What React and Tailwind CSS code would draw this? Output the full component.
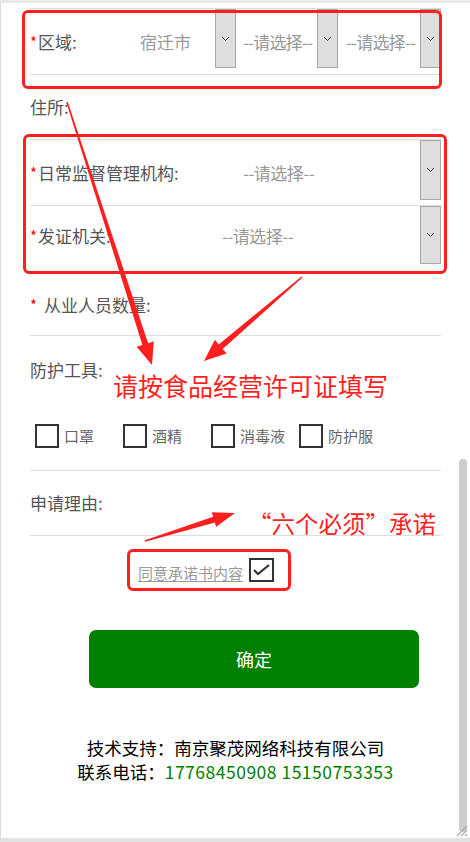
import React from "react";

const arrowPoints = (x1, y1, x2, y2, w1, w2, hl, hw) => {
  const dx = x2 - x1;
  const dy = y2 - y1;
  const len = Math.hypot(dx, dy);
  const ux = dx / len;
  const uy = dy / len;
  const px = -uy;
  const py = ux;
  const bx = x2 - ux * hl;
  const by = y2 - uy * hl;
  const pts = [
    [x1 + (px * w1) / 2, y1 + (py * w1) / 2],
    [bx + (px * w2) / 2, by + (py * w2) / 2],
    [bx + (px * hw) / 2, by + (py * hw) / 2],
    [x2, y2],
    [bx - (px * hw) / 2, by - (py * hw) / 2],
    [bx - (px * w2) / 2, by - (py * w2) / 2],
    [x1 - (px * w1) / 2, y1 - (py * w1) / 2],
  ];
  return pts.map((p) => p.join(",")).join(" ");
};

const Chevron = () => (
  <svg width="9" height="6" viewBox="0 0 9 6">
    <path d="M1 1 L4.5 4.5 L8 1" fill="none" stroke="#444" strokeWidth="1" />
  </svg>
);

const ArrowBox = ({ h = "h-[59px]" }) => (
  <div className={`w-[21px] ${h} self-start bg-[#dedede] border border-[#a8a8a8] flex items-center justify-center`}>
    <Chevron />
  </div>
);

const Star = () => <span className="text-[#ff0000] text-[15px] mr-px">*</span>;

const Check = ({ label }) => (
  <div className="w-[88px] flex items-center">
    <div className="w-[24px] h-[24px] border-2 border-[#333]" />
    <span className="ml-[5px] text-[15px] text-[#666]">{label}</span>
  </div>
);

const App = () => {
  return (
    <div
      lang="zh-CN"
      className="relative w-[470px] h-[842px] bg-white overflow-hidden font-['Noto_Sans_CJK_SC','Noto_Sans',sans-serif] leading-[24px]"
    >
      <div className="h-[3px] bg-[#e9e9e9]" />
      <div className="flex h-[835px]">
        <div className="w-px bg-[#dcdcdc]" />
        <main className="w-[457px] pl-[29px] pr-[17px] pt-[5px] text-[17px] text-[#555]">
          {/* 区域 */}
          <div className="h-[67px] border-y border-[#dddddd] flex items-center">
            <div className="w-[86px] flex items-center">
              <Star />
              <span>区域:</span>
            </div>
            <div className="w-[120px] h-full flex items-center">
              <span className="flex-1 text-center text-[#999]">宿迁市</span>
              <ArrowBox />
            </div>
            <div className="ml-[7px] w-[95px] h-full flex items-center">
              <span className="flex-1 text-[#999] tracking-[-0.8px] whitespace-nowrap overflow-hidden">--请选择--</span>
              <ArrowBox />
            </div>
            <div className="ml-[8px] w-[95px] h-full flex items-center">
              <span className="flex-1 text-[#999] tracking-[-0.8px] whitespace-nowrap overflow-hidden">--请选择--</span>
              <ArrowBox />
            </div>
          </div>

          {/* 住所 */}
          <div className="h-[64px] flex items-center">住所:</div>

          {/* 日常监督管理机构 */}
          <div className="h-[67px] border-y border-[#dddddd] flex items-center">
            <div className="w-[213px] flex items-center">
              <Star />
              <span>日常监督管理机构:</span>
            </div>
            <span className="flex-1 text-[#999] tracking-[-0.5px]">--请选择--</span>
            <ArrowBox h="h-[60px]" />
          </div>

          {/* 发证机关 */}
          <div className="h-[60px] flex items-center">
            <div className="w-[192px] flex items-center">
              <Star />
              <span>发证机关:</span>
            </div>
            <span className="flex-1 text-[#999] tracking-[-0.5px]">--请选择--</span>
            <ArrowBox h="h-[58px]" />
          </div>

          {/* 从业人员数量 */}
          <div className="h-[70px] pt-[8px] border-b border-[#dddddd] flex items-center">
            <Star />
            <span className="ml-[6px]">从业人员数量:</span>
          </div>

          {/* 防护工具 */}
          <div className="h-[135px] pt-[22px] border-b border-[#dddddd]">
            <div>防护工具:</div>
            <div className="mt-[42px] pl-[5px] flex">
              <Check label="口罩" />
              <Check label="酒精" />
              <Check label="消毒液" />
              <Check label="防护服" />
            </div>
          </div>

          {/* 申请理由 */}
          <div className="h-[65px] border-b border-[#dddddd] flex items-center">申请理由:</div>

          {/* 同意承诺书 */}
          <div className="mt-[22px] ml-[108px] flex items-end">
            <span className="text-[15px] leading-[18px] text-[#999] underline underline-offset-2">同意承诺书内容</span>
            <div className="ml-[6px] w-[25px] h-[24px] border-2 border-[#333] flex items-center justify-center">
              <svg width="17" height="12" viewBox="0 0 17 12">
                <path d="M1 6 L5 10 L16 1" fill="none" stroke="#333" strokeWidth="2.2" />
              </svg>
            </div>
          </div>

          <button className="mt-[48px] ml-[59px] w-[330px] h-[58px] rounded-[7px] bg-[#008000] text-white text-[18px]">
            确定
          </button>

          <div className="mt-[48px] text-center text-[17.5px] text-black leading-[24px] whitespace-nowrap">
            <div>技术支持：南京聚茂网络科技有限公司</div>
            <div>
              联系电话：<span className="text-[#008000] tracking-[0.5px]">17768450908 15150753353</span>
            </div>
          </div>
        </main>
        <div className="w-[12px] pt-[456px] pl-px">
          <div className="w-[8px] h-[373px] rounded-full bg-[#cccccc]" />
        </div>
      </div>
      <div className="h-[4px] bg-[#e2e2e2]" />

      {/* resize grip */}
      <svg className="absolute left-[454px] top-[823px]" width="14" height="14" viewBox="0 0 14 14">
        <path d="M13 3 L3 13 M13 7 L7 13 M13 11 L11 13" stroke="#aaa" strokeWidth="1.2" />
      </svg>

      {/* annotations */}
      <div className="absolute left-[22px] top-[10px] w-[420px] h-[79px] border-[3px] border-[#ff1f1f] rounded-[6px]" />
      <div className="absolute left-[23px] top-[134px] w-[424px] h-[140px] border-[3px] border-[#ff1f1f] rounded-[6px]" />
      <div className="absolute left-[127px] top-[549px] w-[164px] h-[42px] border-[3px] border-[#ff1f1f] rounded-[6px]" />

      <svg className="absolute left-0 top-0" width="470" height="842" viewBox="0 0 470 842">
        <polygon points={arrowPoints(67, 102, 152, 365, 1.5, 6, 22, 18)} fill="#ff1f1f" />
        <polygon points={arrowPoints(302, 277, 204, 361, 1.5, 6, 22, 18)} fill="#ff1f1f" />
        <polygon points={arrowPoints(145, 541, 235, 513, 1.5, 6, 22, 15)} fill="#ff1f1f" />
      </svg>

      <div className="absolute left-[113px] top-[369px] text-[25px] leading-[32px] text-[#ff1f1f] whitespace-nowrap">
        请按食品经营许可证填写
      </div>
      <div className="absolute left-[248px] top-[507px] text-[23.5px] leading-[32px] text-[#ff1f1f] whitespace-nowrap">
        “六个必须”承诺
      </div>
    </div>
  );
};

export default App;
